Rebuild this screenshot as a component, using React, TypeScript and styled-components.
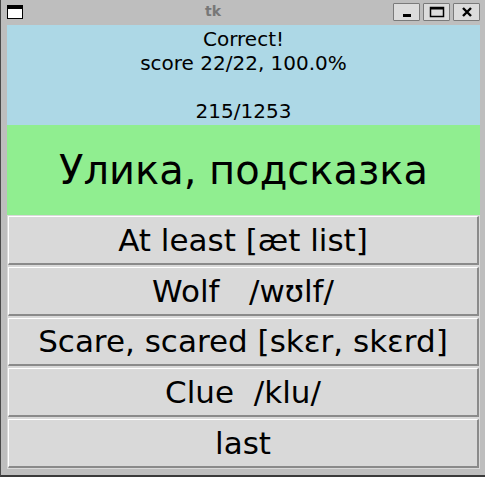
import React from 'react'
import styled, { createGlobalStyle } from 'styled-components'

const GlobalStyle = createGlobalStyle`
  html, body {
    margin: 0;
    padding: 0;
    background: #3a3a3a;
  }
`

const Window = styled.div`
  width: 485px;
  height: 477px;
  box-sizing: border-box;
  background: #bebebe;
  border-left: 1px solid #4a4a4a;
  border-bottom: 2px solid #3a3a3a;
  display: flex;
  flex-direction: column;
  font-family: 'DejaVu Sans', sans-serif;
  overflow: hidden;
`

const TitleBar = styled.div`
  height: 25px;
  flex: none;
  display: flex;
  align-items: center;
  padding: 0 5px 0 6px;
`

const AppIcon = styled.div`
  width: 16px;
  height: 14px;
  box-sizing: border-box;
  background: #fff;
  border: 1px solid #000;
  border-top-width: 4px;
  margin-top: -1px;
`

const Title = styled.div`
  flex: 1;
  text-align: center;
  font-size: 14px;
  font-weight: bold;
  color: #777777;
  margin: -3px 0 0 10px;
`

const Controls = styled.div`
  display: flex;
  gap: 3px;
  margin-top: -2px;
`

const CtrlButton = styled.div`
  width: 27px;
  height: 18px;
  box-sizing: border-box;
  background: #dcdcdc;
  border: 1px solid #7a7a7a;
  border-radius: 1px;
  display: flex;
  align-items: center;
  justify-content: center;
`

const Body = styled.div`
  flex: 1;
  display: flex;
  flex-direction: column;
  padding: 0 5px 6px 6px;
`

const Status = styled.div`
  height: 100px;
  flex: none;
  background: #add8e6;
  display: flex;
  align-items: center;
  justify-content: center;
  text-align: center;
  white-space: pre-line;
  font-size: 20px;
  color: #000;
`

const Word = styled.div`
  height: 90px;
  flex: none;
  background: #90ee90;
  display: flex;
  align-items: center;
  justify-content: center;
  font-size: 40px;
  color: #000;
`

const Choices = styled.div`
  flex: 1;
  display: flex;
  flex-direction: column;
  background: #d9d9d9;
`

const Choice = styled.button`
  flex: 1;
  margin: 1px;
  padding: 0;
  box-sizing: border-box;
  background: #d9d9d9;
  border-style: solid;
  border-width: 1px 2px 2px 1px;
  border-color: #ffffff #8a8a8a #8a8a8a #ffffff;
  font-family: 'DejaVu Sans', sans-serif;
  font-size: 31px;
  color: #000;
  white-space: pre;
  display: flex;
  align-items: center;
  justify-content: center;
`

const choices = [
  'At least [æt list]',
  'Wolf   /wʊlf/',
  'Scare, scared [skɛr, skɛrd]',
  'Clue  /klu/',
  'last',
]

const App = () => {
  return (
    <>
      <GlobalStyle />
      <Window>
        <TitleBar>
          <AppIcon />
          <Title>tk</Title>
          <Controls>
            <CtrlButton>
              <svg width="12" height="12" viewBox="0 0 12 12">
                <rect x="2" y="8" width="8" height="3" fill="#000" />
              </svg>
            </CtrlButton>
            <CtrlButton>
              <svg width="16" height="12" viewBox="0 0 16 12">
                <rect x="1.5" y="1.5" width="13" height="9" fill="none" stroke="#000" strokeWidth="1.5" />
                <rect x="1" y="1" width="14" height="2.5" fill="#000" />
              </svg>
            </CtrlButton>
            <CtrlButton>
              <svg width="12" height="12" viewBox="0 0 12 12">
                <path d="M2 2 L10 10 M10 2 L2 10" stroke="#000" strokeWidth="2.4" />
              </svg>
            </CtrlButton>
          </Controls>
        </TitleBar>
        <Body>
          <Status>{'Correct!\nscore 22/22, 100.0%\n\n215/1253'}</Status>
          <Word>Улика, подсказка</Word>
          <Choices>
            {choices.map((c) => (
              <Choice key={c}>{c}</Choice>
            ))}
          </Choices>
        </Body>
      </Window>
    </>
  )
}

export default App
